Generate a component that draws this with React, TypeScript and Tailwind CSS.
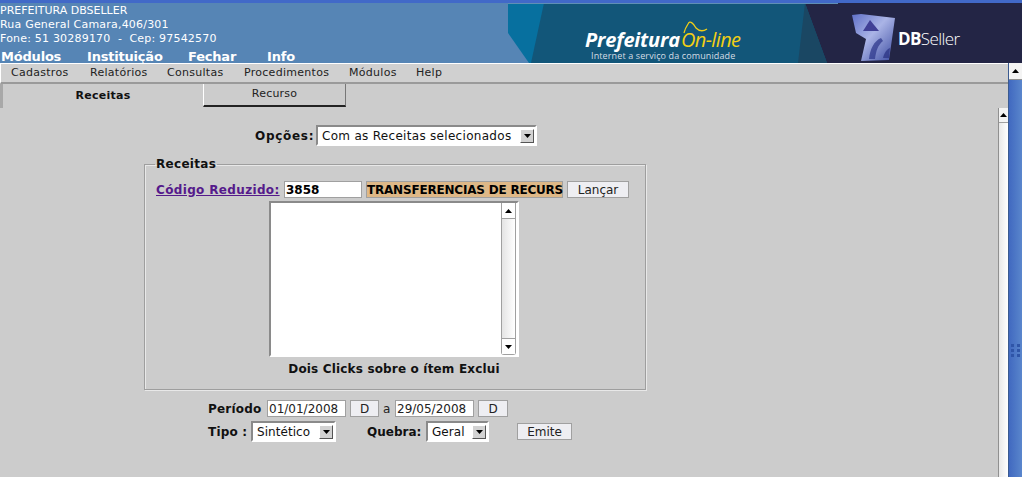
import React from "react";

function Arrow({ down = false, className = "" }: { down?: boolean; className?: string }) {
  return (
    <svg width="7" height="4" viewBox="0 0 7 4" className={className}>
      <polygon points={down ? "0,0 7,0 3.5,4" : "0,4 7,4 3.5,0"} fill="#000" />
    </svg>
  );
}

function Select({ label, w, wide = false }: { label: string; w: string; wide?: boolean }) {
  return (
    <div className={`${w} h-[21px] flex items-center justify-between bg-white border-2 border-t-[#8a8a8a] border-l-[#8a8a8a] border-r-white border-b-white text-[12px] text-[#111] pl-[4px] pr-[1px]`}>
      <span className={wide ? "whitespace-nowrap tracking-[0.3px]" : "whitespace-nowrap tracking-[0.05px]"}>{label}</span>
      <span className="w-[14px] h-[14px] flex items-center justify-center bg-[#d2d2d2] border border-t-white border-l-white border-r-[#555] border-b-[#555]">
        <svg width="7" height="4" viewBox="0 0 7 4"><polygon points="0,0 7,0 3.5,4" fill="#000" /></svg>
      </span>
    </div>
  );
}

function Btn({ label, w }: { label: string; w: string }) {
  return (
    <div className={`${w} h-[17px] flex items-center justify-center bg-[#eeeef2] border border-[#a0a0a0] text-[12px] text-[#222]`}>{label}</div>
  );
}

function Input({ value, w, className = "" }: { value: string; w: string; className?: string }) {
  return (
    <div className={`${w} h-[17px] flex items-center bg-white border border-[#a0a0a0] text-[12px] text-[#222] pl-[1px] overflow-hidden ${className}`}>{value}</div>
  );
}

function Banner() {
  return (
    <div className="relative w-[514px] h-[60px] overflow-hidden bg-[#125679]">
      <svg width="514" height="60" viewBox="0 0 514 60" className="block">
        <defs>
          <linearGradient id="m" x1="0" y1="0" x2="1" y2="1">
            <stop offset="0" stopColor="#5f70c8" />
            <stop offset="0.45" stopColor="#aab4e6" />
            <stop offset="1" stopColor="#3a4aa0" />
          </linearGradient>
          <filter id="b"><feGaussianBlur stdDeviation="0.6" /></filter>
        </defs>
        <rect x="0" y="0" width="514" height="60" fill="#125679" />
        <polygon points="0,0 36,0 23,60 0,60" fill="#07709f" />
        <polygon points="0,30 21,60 0,60" fill="#5685b5" />
        <polygon points="297,0 514,0 514,60 319,60" fill="#232545" />
        <polygon points="297,0 319,60 290,60" fill="#1a4763" />
        <rect x="0" y="0" width="330" height="1" fill="#5f8fb5" />
        <path d="M176 30 C177 26 178 24 180 21 C182 17 185 20 188 25 C192 29 196 28 199 26" fill="none" stroke="#f3cf14" strokeWidth="1.3" />
        <g filter="url(#b)">
          <polygon points="344,12 353,11 387,15 381,57 353,58 358,36 348,30" fill="url(#m)" />
          <polygon points="355,28 362,17 371,28" fill="#3f3f96" />
          <path d="M361 56 C362 46 366 38 373 35 L375 38 C370 42 368 48 367 56 Z" fill="#2f3a8c" opacity="0.75" />
          <path d="M375 55 C376 50 379 46 382 45 L381 55 Z" fill="#2c3684" opacity="0.75" />
        </g>
      </svg>
      <div className="absolute left-[77px] top-[28px] h-[18px] flex items-baseline leading-[18px] whitespace-nowrap">
        <span className="font-['Open_Sans',sans-serif] italic font-bold text-white text-[20px] leading-[18px] tracking-[-0.2px]">Prefeitura</span>
        <span className="font-['Open_Sans',sans-serif] italic text-[#f3cf14] text-[20px] leading-[18px] tracking-[-0.6px] ml-[1px]">On-line</span>
      </div>
      <div className="absolute left-[83px] top-[48px] font-['Open_Sans',sans-serif] text-[9px] leading-none text-[#d5dde5] whitespace-nowrap tracking-[0.12px]">Internet a serviço da comunidade</div>
      <div className="absolute left-[390px] top-[27px] flex items-baseline font-['Open_Sans',sans-serif] text-white text-[17px] leading-none tracking-[-0.6px]">
        <span className="font-bold">DB</span><span className="font-light">Seller</span>
      </div>
    </div>
  );
}

export default function App() {
  return (
    <div className="w-[1022px] h-[477px] overflow-hidden flex flex-col bg-[#cccccc] font-['DejaVu_Sans',sans-serif]">
      <div className="h-[3px] bg-[#4169c8] shrink-0" />
      <header className="h-[60px] shrink-0 flex bg-[#5685b5]">
        <div className="w-[508px] text-white flex flex-col pt-[1px] overflow-hidden">
          <div className="text-[11px] leading-[14px] whitespace-nowrap">PREFEITURA DBSELLER</div>
          <div className="text-[11px] leading-[14px] whitespace-nowrap tracking-[0.2px]">Rua General Camara,406/301</div>
          <div className="text-[11px] leading-[14px] whitespace-pre tracking-[0.2px]">Fone: 51 30289170  -  Cep: 97542570</div>
          <div className="flex text-[13px] font-bold leading-[15px] mt-[2px] whitespace-nowrap tracking-[-0.2px] pt-[1px]">
            <span className="ml-[1px] w-[86px]">Módulos</span>
            <span className="w-[101px]">Instituição</span>
            <span className="w-[79px]">Fechar</span>
            <span>Info</span>
          </div>
        </div>
        <Banner />
      </header>
      <div className="flex-1 flex min-h-0">
        <div className="flex-1 min-w-0 flex flex-col">
          <nav className="h-[21px] shrink-0 flex items-center bg-[#d0d0d0] border-b-2 border-[#9a9a9a] border-t border-t-white border-l border-l-white text-[11px] text-[#222] whitespace-nowrap tracking-[0.28px] pt-[1px]">
            <span className="ml-[10px] w-[79px]">Cadastros</span>
            <span className="w-[77px]">Relatórios</span>
            <span className="w-[77px]">Consultas</span>
            <span className="w-[105px]">Procedimentos</span>
            <span className="w-[67px]">Módulos</span>
            <span>Help</span>
          </nav>
          <div className="h-[24px] shrink-0 flex">
            <div className="w-[203px] flex items-center justify-center bg-[#cccccc] border-l-[3px] border-[#a8a8a8] text-[11px] font-bold text-[#111] pt-[1px] tracking-[0.25px]">Receitas</div>
            <div className="w-[143px] h-[23px] flex items-center justify-center border-l border-l-white border-r border-r-[#777] border-b-2 border-b-[#222] text-[11px] text-[#222] tracking-[0.2px]">Recurso</div>
          </div>
          <div className="flex-1 flex min-h-0">
            <main className="flex-1 min-w-0 pt-[17px]">
              <div className="flex items-center ml-[255px] h-[21px]">
                <span className="w-[61px] text-[12px] font-bold text-[#111] tracking-[0.7px]">Opções:</span>
                <Select label="Com as Receitas selecionados" w="w-[221px]" wide />
              </div>
              <fieldset className="ml-[144px] mt-[11px] w-[502px] h-[233px] border border-[#9e9e9e] shadow-[inset_1px_1px_0_#e8e8e8,1px_1px_0_#e8e8e8] px-[10px]">
                <legend className="text-[12px] font-bold text-[#111] px-[1px] leading-[14px] tracking-[0.3px]">Receitas</legend>
                <div className="flex items-center h-[17px] mt-[10px]">
                  <span className="ml-[1px] w-[128px] text-[12px] font-bold text-[#551a8b] underline whitespace-nowrap tracking-[0.35px]">Código Reduzido:</span>
                  <Input value="3858" w="w-[78px]" className="font-bold !text-black" />
                  <div className="ml-[4px] w-[197px] h-[17px] flex items-center bg-[#deb887] border border-[#a0a0a0] text-[12px] font-bold text-black whitespace-pre tracking-[-0.2px]">TRANSFERENCIAS DE RECURS</div>
                  <div className="ml-[4px]"><Btn label="Lançar" w="w-[62px]" /></div>
                </div>
                <div className="ml-[114px] mt-[3px] w-[250px] h-[156px] flex bg-white border-2 border-t-[#8a8a8a] border-l-[#8a8a8a] border-r-white border-b-white">
                  <div className="flex-1" />
                  <div className="w-[15px] flex flex-col justify-between bg-gradient-to-r from-[#e4e4e4] to-white border-l border-r border-b border-[#a0a0a0] rounded-b-[3px] mr-[1px]">
                    <div className="h-[16px] flex items-center justify-center bg-white border-b border-[#a0a0a0]"><Arrow /></div>
                    <div className="h-[16px] flex items-center justify-center bg-white border-t border-[#a0a0a0]"><Arrow down /></div>
                  </div>
                </div>
                <div className="ml-[14px] w-[450px] text-center text-[12px] font-bold text-[#111] mt-[3px] tracking-[0.17px]">Dois Clicks sobre o ítem Exclui</div>
              </fieldset>
              <div className="flex items-center ml-[208px] mt-[10px] h-[17px]">
                <span className="w-[59px] text-[12px] font-bold text-[#111] tracking-[0.2px]">Período</span>
                <Input value="01/01/2008" w="w-[79px]" />
                <div className="ml-[4px]"><Btn label="D" w="w-[29px]" /></div>
                <span className="ml-[4px] w-[12px] text-[12px] text-[#222]">a</span>
                <Input value="29/05/2008" w="w-[79px]" />
                <div className="ml-[4px]"><Btn label="D" w="w-[30px]" /></div>
              </div>
              <div className="flex items-center ml-[208px] mt-[4px] h-[21px]">
                <span className="w-[43px] text-[12px] font-bold text-[#111] whitespace-pre tracking-[0.2px]">Tipo :</span>
                <Select label="Sintético" w="w-[85px]" />
                <span className="ml-[31px] w-[59px] text-[12px] font-bold text-[#111]">Quebra:</span>
                <Select label="Geral" w="w-[63px]" />
                <div className="ml-[28px]"><Btn label="Emite" w="w-[55px]" /></div>
              </div>
            </main>
            <div className="w-[10px] shrink-0 flex flex-col overflow-hidden border-l border-[#909090] bg-gradient-to-r from-[#e8e8e8] to-white">
              <div className="w-[15px] h-[15px] bg-[#f4f4f4] border-b border-[#a0a0a0] flex items-center pl-[1px]"><Arrow /></div>
            </div>
          </div>
        </div>
        <aside className="w-[14px] shrink-0 flex flex-col bg-[#4f7cc8] border-l border-[#3a5a90]">
          <div className="h-[17px] bg-[#f4f4f4] border-b border-[#909090] flex items-center justify-center"><Arrow /></div>
          <div className="flex-1 flex items-start justify-center pt-[264px] bg-gradient-to-r from-[#4169c0] to-[#5a86cc]">
            <div className="grid grid-cols-2 gap-x-[3px] gap-y-[2px]">
              {[0, 1, 2, 3, 4, 5].map((i) => (
                <span key={i} className="w-[3px] h-[3px] bg-[#2f55a8]" />
              ))}
            </div>
          </div>
        </aside>
      </div>
    </div>
  );
}
